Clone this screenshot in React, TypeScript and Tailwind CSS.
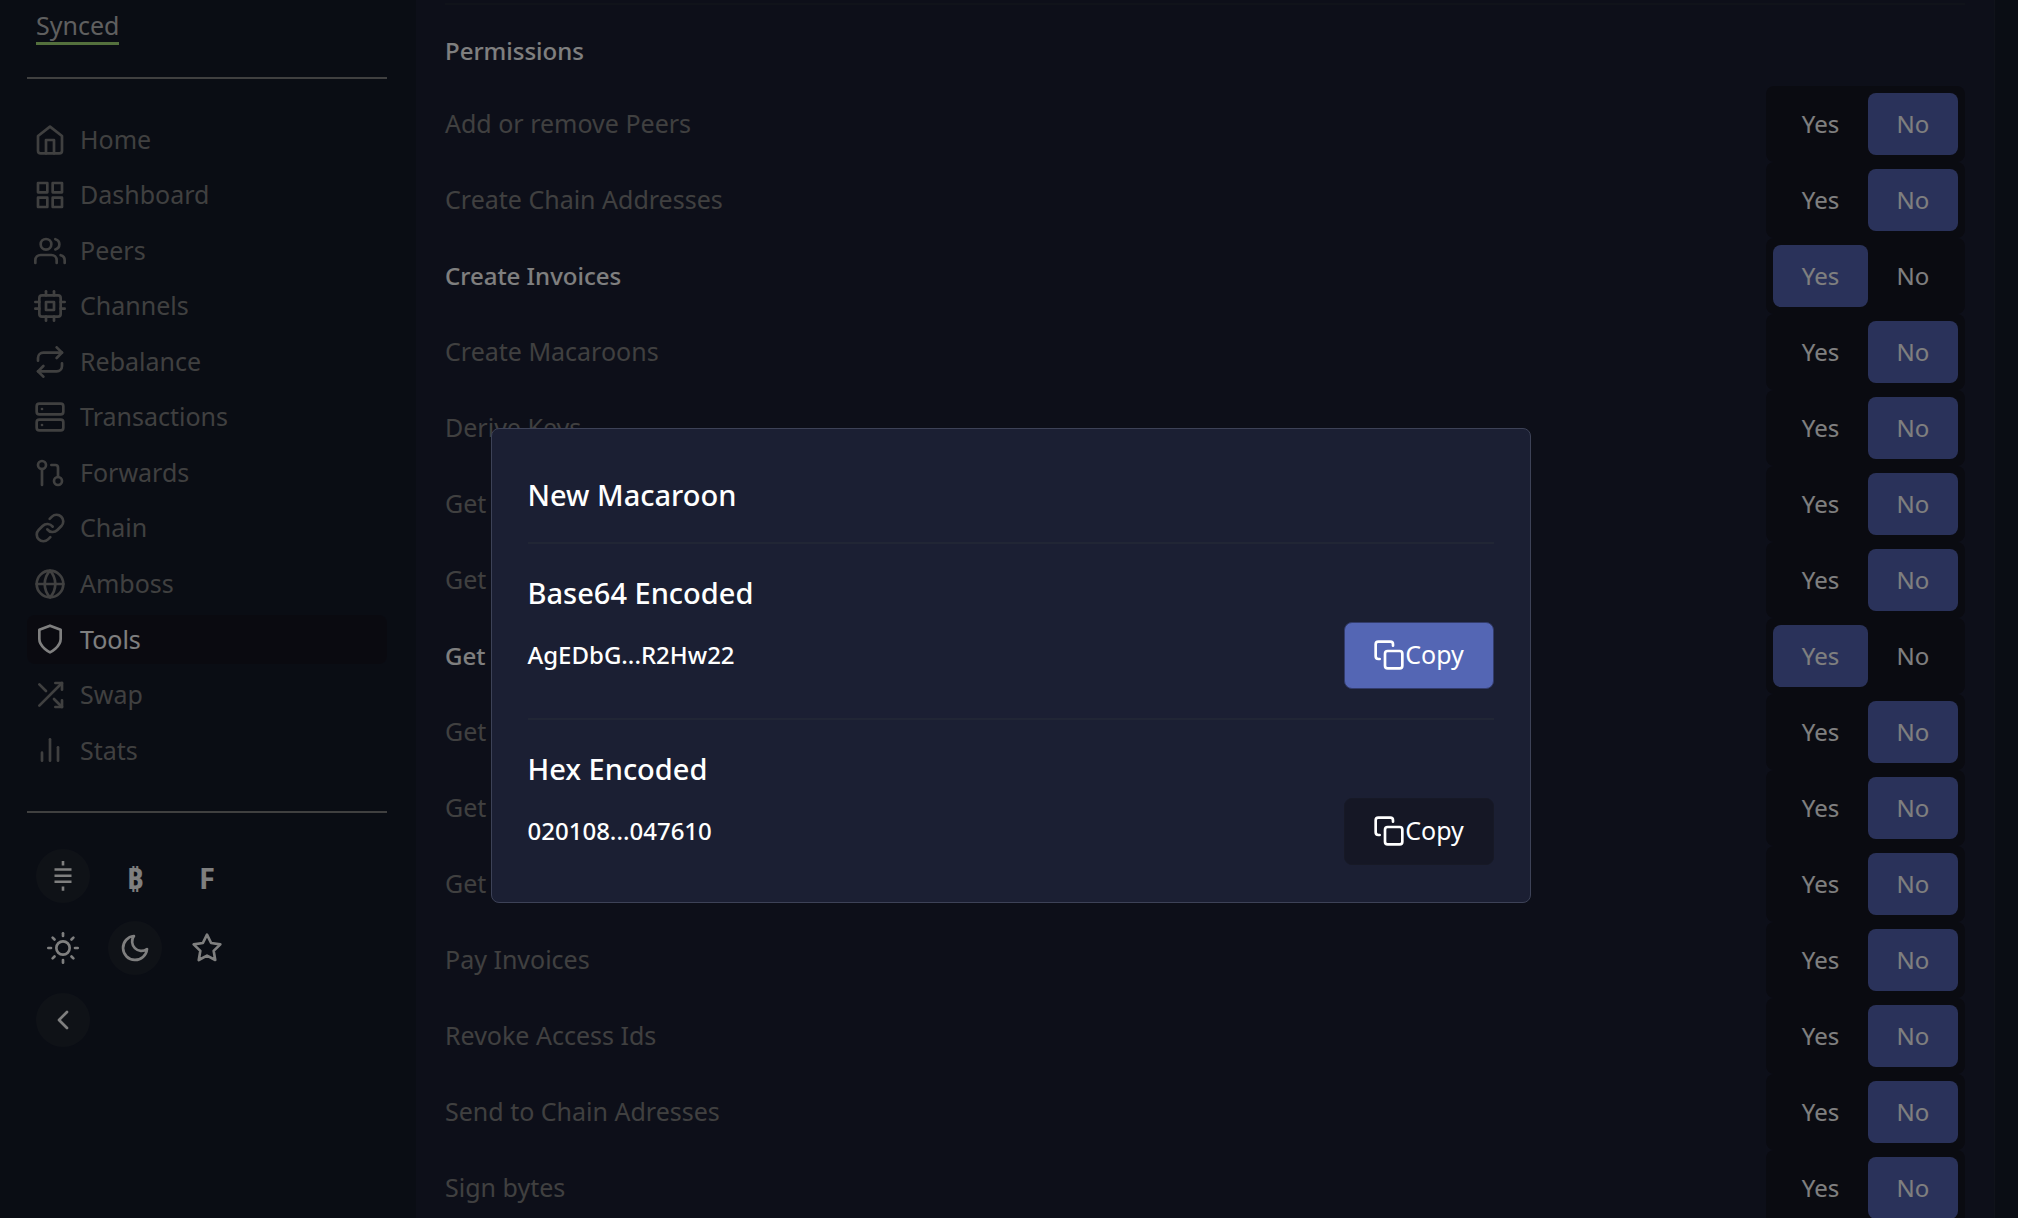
import type { ReactNode } from "react";
import type { IconType } from "react-icons";
import {
  FiBarChart2,
  FiChevronLeft,
  FiCopy,
  FiCpu,
  FiGitPullRequest,
  FiGlobe,
  FiGrid,
  FiHome,
  FiLink,
  FiMoon,
  FiRepeat,
  FiServer,
  FiShield,
  FiShuffle,
  FiStar,
  FiSun,
  FiUsers,
} from "react-icons/fi";
import { clsx } from "clsx";

const navItems: { label: string; icon: IconType }[] = [
  { label: "Home", icon: FiHome },
  { label: "Dashboard", icon: FiGrid },
  { label: "Peers", icon: FiUsers },
  { label: "Channels", icon: FiCpu },
  { label: "Rebalance", icon: FiRepeat },
  { label: "Transactions", icon: FiServer },
  { label: "Forwards", icon: FiGitPullRequest },
  { label: "Chain", icon: FiLink },
  { label: "Amboss", icon: FiGlobe },
  { label: "Tools", icon: FiShield },
  { label: "Swap", icon: FiShuffle },
  { label: "Stats", icon: FiBarChart2 },
];

const permissions = [
  { label: "Add or remove Peers", allowed: false },
  { label: "Create Chain Addresses", allowed: false },
  { label: "Create Invoices", allowed: true },
  { label: "Create Macaroons", allowed: false },
  { label: "Derive Keys", allowed: false },
  { label: "Get", allowed: false },
  { label: "Get", allowed: false },
  { label: "Get", allowed: true },
  { label: "Get", allowed: false },
  { label: "Get", allowed: false },
  { label: "Get", allowed: false },
  { label: "Pay Invoices", allowed: false },
  { label: "Revoke Access Ids", allowed: false },
  { label: "Send to Chain Adresses", allowed: false },
  { label: "Sign bytes", allowed: false },
];

function SatoshiIcon() {
  return (
    <svg viewBox="0 0 18 30" className="h-[30px] w-[18px]" fill="currentColor" aria-hidden="true">
      <path d="M7.7 0h2.6v4.4H7.7zM7.7 25.4h2.6v4.4H7.7zM.5 7.2h17v2.6H.5zM.5 13.4h17V16H.5zM.5 19.4h17V22H.5z" />
    </svg>
  );
}

function RoundButton({
  label,
  active,
  children,
}: {
  label: string;
  active?: boolean;
  children: ReactNode;
}) {
  return (
    <button
      type="button"
      aria-label={label}
      className={clsx(
        "flex size-[54px] items-center justify-center rounded-full text-white",
        active && "bg-[#1f242f]"
      )}
    >
      {children}
    </button>
  );
}

function Sidebar() {
  return (
    <aside className="w-[416px] shrink-0 bg-[#141a29] pr-[29px] pl-[27px]">
      <div className="px-[9px] pt-2">
        <span className="inline-block border-b-3 border-[#a8e07a] text-[25px] leading-[34px] text-[#bfbfbf]">
          Synced
        </span>
      </div>
      <hr className="mt-8 border-t-2 border-[#808080]" />
      <nav className="mt-9 flex h-[660px] flex-col justify-between">
        {navItems.map(({ label, icon: Icon }) => (
          <a
            key={label}
            href="#"
            className={clsx(
              "flex h-[49px] items-center gap-[14px] rounded-lg px-[7px] text-[25px]",
              label === "Tools" ? "bg-[#151521] text-white" : "text-[#808080]"
            )}
          >
            <Icon size={32} />
            {label}
          </a>
        ))}
      </nav>
      <hr className="mt-9 border-t-2 border-[#808080]" />
      <div className="mt-9 grid w-fit grid-cols-3 gap-[18px] px-[9px] text-[29px] font-bold">
        <RoundButton label="Satoshis" active>
          <SatoshiIcon />
        </RoundButton>
        <RoundButton label="Bitcoin">
          <span className="pt-1">₿</span>
        </RoundButton>
        <RoundButton label="Fiat">
          <span className="pt-1">F</span>
        </RoundButton>
        <RoundButton label="Light theme">
          <FiSun size={32} />
        </RoundButton>
        <RoundButton label="Dark theme" active>
          <FiMoon size={32} />
        </RoundButton>
        <RoundButton label="Night theme">
          <FiStar size={32} />
        </RoundButton>
        <RoundButton label="Collapse menu" active>
          <FiChevronLeft size={32} />
        </RoundButton>
      </div>
    </aside>
  );
}

function PermissionRow({ label, allowed }: { label: string; allowed: boolean }) {
  return (
    <li className="flex items-center justify-between">
      <span
        className={allowed ? "text-2xl font-medium text-white" : "text-[25px] text-[#808080]"}
      >
        {label}
      </span>
      <div
        role="group"
        aria-label={label}
        className="flex rounded-lg bg-[#151623] p-[7px] text-2xl text-white"
      >
        <button
          type="button"
          aria-pressed={allowed}
          className={clsx("h-[62px] w-[95px] rounded-lg", allowed && "bg-[#5565b4]")}
        >
          Yes
        </button>
        <button
          type="button"
          aria-pressed={!allowed}
          className={clsx("h-[62px] w-[90px] rounded-lg", !allowed && "bg-[#5565b4]")}
        >
          No
        </button>
      </div>
    </li>
  );
}

function MacaroonValue({
  title,
  value,
  highlighted,
}: {
  title: string;
  value: string;
  highlighted?: boolean;
}) {
  return (
    <section className="border-t-2 border-[#212635] pt-[29px]">
      <h3 className="mb-[9px] text-[29px] leading-10 font-medium">{title}</h3>
      <div className="flex items-center justify-between">
        <span className="text-2xl font-medium">{value}</span>
        <button
          type="button"
          className={clsx(
            "flex h-[67px] w-[150px] items-center justify-center rounded-lg border text-[25px]",
            highlighted ? "border-[#333c6b] bg-[#5466b4]" : "border-[#171926] bg-[#151725]"
          )}
        >
          <FiCopy size={32} />
          Copy
        </button>
      </div>
    </section>
  );
}

function MacaroonModal() {
  return (
    <div className="fixed inset-0 flex items-center justify-center bg-black/50 pt-28 pl-[3px]">
      <div
        role="dialog"
        aria-modal="true"
        aria-labelledby="macaroon-title"
        className="w-[1040px] max-w-full rounded-lg border border-[#3d4257] bg-[#1b1f33] px-9 pt-[46px] pb-[37px] text-white"
      >
        <h2 id="macaroon-title" className="mb-[27px] text-[29px] leading-10 font-medium">
          New Macaroon
        </h2>
        <div className="flex flex-col gap-[29px]">
          <MacaroonValue title="Base64 Encoded" value="AgEDbG...R2Hw22" highlighted />
          <MacaroonValue title="Hex Encoded" value="020108...047610" />
        </div>
      </div>
    </div>
  );
}

export default function App() {
  return (
    <div className="flex h-screen overflow-hidden bg-[#141a29] font-['Noto_Sans',sans-serif]">
      <Sidebar />
      <main className="mr-[23px] min-w-0 flex-1 border-r border-[#212635] bg-[#1b1f33] px-[29px] pt-[3px]">
        <div className="border-t-2 border-[#212635] pt-7">
          <h2 className="text-2xl leading-9 font-medium text-white">Permissions</h2>
          <ul className="mt-[17px]">
            {permissions.map((permission, index) => (
              <PermissionRow key={index} {...permission} />
            ))}
          </ul>
        </div>
      </main>
      <MacaroonModal />
    </div>
  );
}
